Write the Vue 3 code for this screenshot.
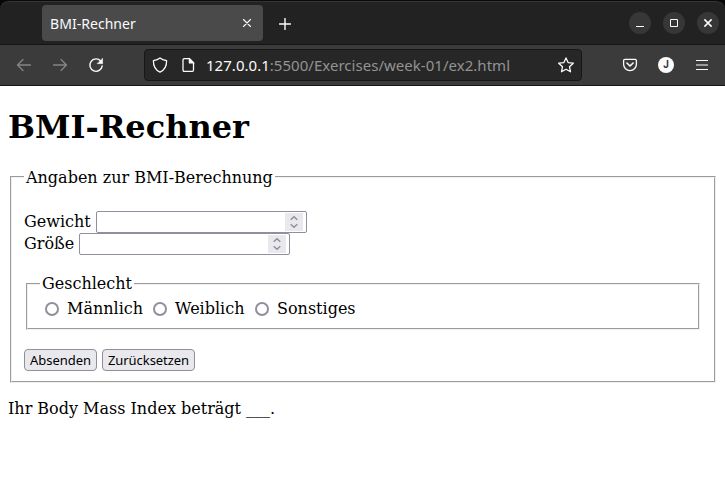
<script setup>
import { ref } from 'vue'

const fields = [
  { id: 'weight', label: 'Gewicht' },
  { id: 'height', label: 'Größe' },
]
const genders = [
  { label: 'Männlich', width: 108 },
  { label: 'Weiblich', width: 102 },
  { label: 'Sonstiges', width: 110 },
]
const gender = ref('')
</script>

<template>
  <div class="window">
    <header class="tabbar">
      <div class="tab">
        <span class="tab-title">BMI-Rechner</span>
        <svg class="tab-close" width="10" height="10" viewBox="0 0 10 10"><path d="M1.500 1.500l7 7M8.500 1.500l-7 7" /></svg>
      </div>
      <svg class="plus" width="12" height="12" viewBox="0 0 12 12"><path d="M6 .5v11M.5 6h11" /></svg>
      <div class="controls">
        <span class="control"><svg width="22" height="22" viewBox="0 0 22 22"><path d="M7 14.5h8" /></svg></span>
        <span class="control"><svg width="22" height="22" viewBox="0 0 22 22"><path d="M7.5 7.5h7v7h-7z" /></svg></span>
        <span class="control"><svg width="22" height="22" viewBox="0 0 22 22"><path d="M7.400 7.400l7.200 7.200M14.600 7.400l-7.200 7.200" stroke-width="1.5" /></svg></span>
      </div>
    </header>
    <nav class="toolbar">
      <svg class="arrow" width="16" height="16" viewBox="0 0 16 16"><path d="M14.500 8H1.500M7 2.500L1.500 8 7 13.500" /></svg>
      <svg class="arrow forward" width="16" height="16" viewBox="0 0 16 16"><path d="M1.500 8h13M9 2.500L14.500 8 9 13.500" /></svg>
      <svg class="reload" width="16" height="16" viewBox="0 0 16 16"><path d="M12.700 4A6.200 6.200 0 1 0 14.200 8.900" /><path d="M14.600 1.500v5.200H9.400z" class="solid" /></svg>
      <div class="urlbar">
        <svg class="shield" width="16" height="16" viewBox="0 0 16 16"><path d="M8 .9C6.200 2.300 3.800 3.100 1.400 3.600c-.1 5.200 1.800 9.600 6.600 11.500 4.800-1.900 6.700-6.300 6.600-11.500C12.200 3.100 9.800 2.300 8 .9z" /></svg>
        <svg class="doc" width="14" height="16" viewBox="0 0 14 16"><path d="M3.200 1.700h5.300l4 4v7.400a1.200 1.200 0 0 1-1.200 1.200H3.200A1.200 1.200 0 0 1 2 13.100V2.900a1.200 1.200 0 0 1 1.200-1.200z" /><path d="M8 1.300v4.900h5z" class="solid" /></svg>
        <span class="url"><b>127.0.0.1</b>:5500/Exercises/week-01/ex2.html</span>
        <svg class="star" width="18" height="18" viewBox="0 0 18 18"><path d="M9 1.900l2.100 4.700 5.200.6-3.800 3.500 1 5.100L9 13.300l-4.500 2.500 1-5.100L1.700 7.200l5.200-.6z" /></svg>
      </div>
      <svg class="pocket" width="16" height="16" viewBox="0 0 16 16"><path d="M2.900 2.300h10.200A1.300 1.300 0 0 1 14.400 3.600V7.300a6.400 6.400 0 0 1-12.800 0V3.600A1.300 1.300 0 0 1 2.900 2.300z" /><path d="M4.900 6L8 9l3.100-3" stroke-width="1.6" /></svg>
      <span class="avatar">J</span>
      <svg class="menu" width="12" height="12" viewBox="0 0 12 12"><path d="M0 1.500h12M0 6h12M0 10.500h12" /></svg>
    </nav>

    <main class="page">
      <h1>BMI-Rechner</h1>
      <form @submit.prevent>
        <fieldset class="outer">
          <legend>Angaben zur BMI-Berechnung</legend>
          <div v-for="f in fields" :key="f.id" class="field">
            <label :for="f.id">{{ f.label }}</label>
            <div class="number">
              <input :id="f.id" type="text" inputmode="decimal" />
              <span class="spinner">
                <svg width="18" height="18" viewBox="0 0 18 18"><path d="M5.700 6.800L9 3.700l3.300 3.100M5.700 11.200L9 14.300l3.300-3.100" /></svg>
              </span>
            </div>
          </div>
          <fieldset class="inner">
            <legend>Geschlecht</legend>
            <div class="radios">
              <label v-for="g in genders" :key="g.label" :style="{ width: g.width + 'px' }">
                <input v-model="gender" type="radio" name="gender" :value="g.label" />{{ g.label }}
              </label>
            </div>
          </fieldset>
          <div class="buttons">
            <button class="send" type="submit">Absenden</button>
            <button class="reset" type="reset">Zurücksetzen</button>
          </div>
        </fieldset>
      </form>
      <p>Ihr Body Mass Index beträgt ___.</p>
    </main>
  </div>
</template>

<style>
body { margin: 0; background: #fff; overflow: hidden; }
</style>

<style scoped>
* { box-sizing: border-box; }
svg { display: block; flex: none; fill: none; stroke: #fbfbfe; stroke-width: 1.3; stroke-linecap: round; stroke-linejoin: round; }
.solid { fill: #fbfbfe; stroke-width: .5; }
.window { width: 725px; height: 477px; overflow: hidden; background: #fff; }
.tabbar {
  display: flex; align-items: flex-start; height: 45px; padding: 4px 6px 0 42px;
  background: #222; border-top: 1px solid #0a0a0a; border-bottom: 1px solid #151515;
  border-radius: 9px 9px 0 0; box-shadow: inset 0 1px #353535, 0 0 0 10px #080808;
  font-family: "Noto Sans", sans-serif;
}
.tab { display: flex; align-items: center; width: 221px; height: 36px; padding: 0 11px 0 8px; border-radius: 4px; background: #4a4a4a; color: #fbfbfe; }
.tab-title { flex: 1; font-size: 14px; letter-spacing: .04px; white-space: nowrap; }
.tab-close { stroke-width: 1.1; }
.plus { margin: 13px 0 0 16px; stroke-width: 1.4; }
.controls { display: flex; gap: 12px; margin: 7px 0 0 auto; }
.control { width: 22px; height: 22px; border-radius: 50%; background: #373737; }
.control svg { stroke-linecap: butt; stroke-linejoin: miter; stroke-width: 1; }
.toolbar {
  position: relative; display: flex; align-items: center; height: 41px; padding: 0 17px 0 16px;
  background: #3b3b3b; border-bottom: 1px solid #171717; font-family: "Noto Sans", sans-serif;
}
.arrow { stroke: #858585; }
.forward { margin-left: 20px; }
.reload { margin-left: 20px; stroke-width: 1.4; }
.urlbar { display: flex; align-items: center; width: 438px; height: 32px; margin-left: 40px; padding: 0 6px 0 7px; border: 1px solid #171717; border-radius: 4px; background: #272727; }
.doc { margin-left: 13px; }
.url { flex: 1; margin-left: 11px; font-size: 15px; letter-spacing: .03px; white-space: nowrap; color: #939393; }
.url b { font-weight: 400; color: #fbfbfe; }
.pocket { margin-left: 40px; }
.avatar { display: flex; align-items: center; justify-content: center; width: 16px; height: 16px; margin-left: 20px; border-radius: 50%; background: #fbfbfe; color: #333; font: 700 10px/16px Roboto, sans-serif; }
.menu { margin-left: 22px; stroke-width: 1.2; }
.page { padding: 0 7px 0 8px; font: 16px/19px "DejaVu Serif", serif; color: #000; }
h1 { margin: 21px 0 22px; padding: 1px 0 0; font-size: 32px; line-height: 38px; font-weight: 700; }
fieldset { margin: 0 2px; border: 2px groove #f0f0f0; min-width: 0; }
legend { height: 18px; padding: 0 2px; }
.outer { height: 215px; padding: 25px 12px 0; }
.field { display: flex; align-items: center; height: 22px; gap: 5px; }
.field label { padding-bottom: 2px; }
.number { display: flex; align-items: center; width: 211px; height: 22px; padding-right: 3px; border: 1px solid #8f8f9d; border-radius: 2px; background: #fff; }
.number input { flex: 1; min-width: 0; height: 18px; padding: 0 2px; border: 0; outline: 0; background: transparent; }
.spinner { width: 18px; height: 18px; background: #e9e9ed; }
.spinner svg { stroke: #8f8f9d; stroke-width: 1.5; stroke-linecap: butt; stroke-linejoin: miter; }
.inner { height: 56px; margin-top: 19px; padding: 5px 12px 0; }
.inner legend { height: 20px; }
.radios { display: flex; padding-left: 5px; }
.radios label { display: flex; align-items: center; white-space: nowrap; }
.radios input { appearance: none; flex: none; width: 14px; height: 14px; margin: 1px 8px 0 0; border: 2px solid #8f8f9d; border-radius: 50%; background: #fff; }
.radios input:checked { box-shadow: inset 0 0 0 2px #fff; background: #0060df; }
.buttons { display: flex; gap: 5px; margin-top: 19px; }
button { height: 22px; padding: 0; border: 1px solid #8f8f9d; border-radius: 4px; background: #e9e9ed; color: #000; font: 13px/18px "Noto Sans", sans-serif; letter-spacing: -.05px; white-space: nowrap; }
.send { width: 73px; }
.reset { width: 93px; }
p { margin: 16px 0 0; }
</style>
